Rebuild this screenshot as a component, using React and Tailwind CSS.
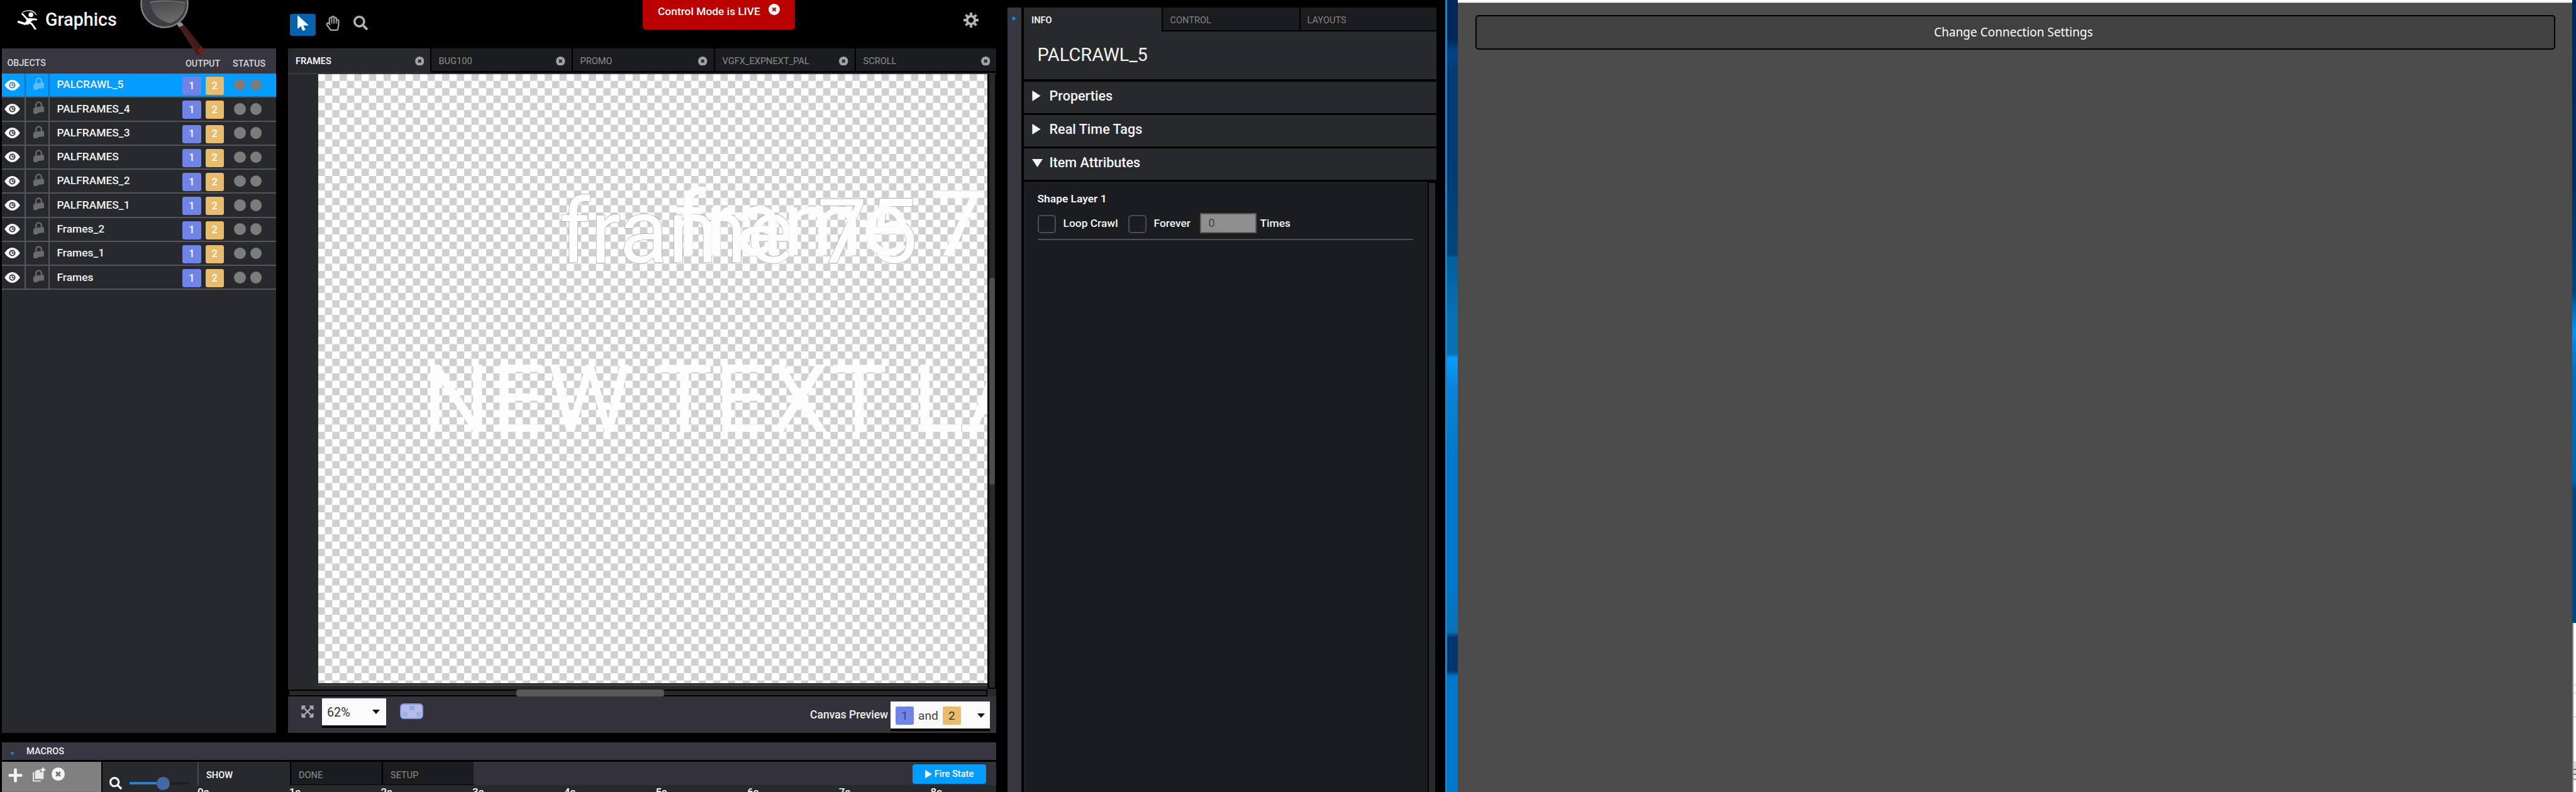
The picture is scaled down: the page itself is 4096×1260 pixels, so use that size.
import React from "react";
import { FaExpandArrowsAlt, FaPlus, FaRegHandPaper, FaSearch } from "react-icons/fa";

const OBJECTS = [
  "PALCRAWL_5",
  "PALFRAMES_4",
  "PALFRAMES_3",
  "PALFRAMES",
  "PALFRAMES_2",
  "PALFRAMES_1",
  "Frames_2",
  "Frames_1",
  "Frames",
];

function CloseCircle({ className, mark = "#1c1d21" }) {
  return (
    <svg viewBox="0 0 16 16" className={className}>
      <circle cx="8" cy="8" r="8" fill="currentColor" />
      <path d="M5.500 5.500l5 5M10.500 5.500l-5 5" stroke={mark} strokeWidth="2" />
    </svg>
  );
}

function Eye({ className, pupil }) {
  return (
    <svg viewBox="0 0 26 18" className={className}>
      <path d="M0 9C4 3 8.500 0 13 0s9 3 13 9c-4 6-8.500 9-13 9S4 15 0 9z" fill="#fafafa" />
      <circle cx="13" cy="9" r="4.400" fill="none" stroke={pupil} strokeWidth="2" />
      <path d="M13 6v3.200h3" fill="none" stroke={pupil} strokeWidth="1.500" />
    </svg>
  );
}

function Lock({ className }) {
  return (
    <svg viewBox="0 0 18 21" className={className}>
      <path d="M4.500 11V6.500a4.500 5 0 0 1 9.200 0V9" fill="none" stroke="currentColor" strokeWidth="2.400" />
      <path d="M0 12.500L2 10.500 16 8.500 18 10v8l-9 1-3 2H1.500L0 19.500z" fill="currentColor" />
    </svg>
  );
}

function Gear({ className }) {
  return (
    <svg viewBox="0 0 26 26" className={className}>
      <circle cx="13" cy="13" r="6.800" fill="none" stroke="currentColor" strokeWidth="4.400" />
      <g stroke="currentColor" strokeWidth="4.200">
        <path d="M13 0v5M13 21v5M0 13h5M21 13h5M3.800 3.800l3.400 3.400M18.800 18.800l3.400 3.400M22.200 3.800l-3.400 3.400M7.200 18.800l-3.400 3.400" />
      </g>
    </svg>
  );
}

function Caret({ className }) {
  return (
    <svg viewBox="0 0 12 7" className={className} preserveAspectRatio="none">
      <path d="M0 0h12L6 7z" fill="currentColor" />
    </svg>
  );
}

function BrandLogo() {
  return (
    <svg viewBox="0 0 33 33" className="h-[31px] w-[31px]">
      <g fill="none" stroke="#fff" strokeLinecap="round">
        <path d="M9 3.500C15 -0.500 27 -0.500 31.500 8" strokeWidth="1.400" />
        <path d="M8 6.500L16 15 31.500 16" strokeWidth="3" />
        <path d="M19 18L12.500 23.500 1.500 20" strokeWidth="3.800" />
        <path d="M18.500 20l6 4 5.500 8" strokeWidth="3.200" />
      </g>
      <circle cx="22.500" cy="8" r="4" fill="#fff" />
      <path d="M14 13l8 1.500 5 2-5 4-4 4.500-7-1 4-6z" fill="#fff" />
    </svg>
  );
}

function MagnifyingGlass() {
  return (
    <svg viewBox="0 0 112 90" className="pointer-events-none absolute left-[222px] top-0 h-[90px] w-[112px]">
      <defs>
        <linearGradient id="lens" x1="0" y1="0" x2="0.300" y2="1">
          <stop offset="0" stopColor="#45454a" />
          <stop offset="1" stopColor="#6b6b6b" />
        </linearGradient>
        <linearGradient id="grip" x1="0" y1="1" x2="1" y2="0.300">
          <stop offset="0.300" stopColor="#a5684f" />
          <stop offset="0.450" stopColor="#4a1f1e" />
          <stop offset="1" stopColor="#2a1010" />
        </linearGradient>
      </defs>
      <circle cx="39.500" cy="6.500" r="37" fill="#3c3d43" stroke="#7e7e80" strokeWidth="2.600" />
      <path d="M16 3Q39 -2 73 3Q72 28 49 37Q22 32 16 3z" fill="url(#lens)" />
      <path d="M16 4Q39 -1 72 4" fill="none" stroke="#86868a" strokeWidth="1.200" />
      <path d="M59 38l7-3 4 5-7 4z" fill="#8f8f8f" />
      <path d="M63 43l8-3q4 4 8 10l23 28q3 5-1 8-6 4-12-2z" fill="url(#grip)" />
      <path d="M97 88q8-1 6-8l-5-5-6 4z" fill="#6d211c" />
    </svg>
  );
}

function ObjectRow({ name, selected }) {
  return (
    <div
      className={
        selected
          ? "flex h-[38.280px] items-center border-b-2 border-[#5b6066] bg-[#049dff]"
          : "flex h-[38.280px] items-center border-b-2 border-[#56565a] bg-[#28292d]"
      }
    >
      <div
        className={
          selected
            ? "flex h-full w-[38px] items-center justify-center border-r-2 border-[#1272b4]"
            : "flex h-full w-[38px] items-center justify-center border-r-2 border-[#56565a]"
        }
      >
        <Eye className="mr-[3px] h-[17px] w-[25px]" pupil={selected ? "#2f83c4" : "#303034"} />
      </div>
      <div
        className={
          selected
            ? "flex h-full w-[38px] items-center border-r-2 border-[#1272b4] pb-[4px] pl-[12px] text-[#5cbcff]"
            : "flex h-full w-[38px] items-center border-r-2 border-[#56565a] pb-[4px] pl-[12px] text-[#6c6c6c]"
        }
      >
        <Lock className="h-[20px] w-[17px]" />
      </div>
      <span className="w-[211px] pl-[11.500px] text-[17.400px] font-medium leading-none text-[#f2f2f2]">{name}</span>
      <div className="flex gap-[7px] pt-[3px] text-[16px] font-medium leading-none text-white">
        <span className="flex h-[29px] w-[29.500px] items-center justify-center rounded-[3px] bg-[#7084e8]">1</span>
        <span className="flex h-[29px] w-[29.500px] items-center justify-center rounded-[3px] bg-[#e8bc6c]">2</span>
      </div>
      <div className="ml-[16px] flex gap-[7px]">
        <span className="size-[18.500px] rounded-full bg-[#7c7c7c]" />
        <span className="size-[18.500px] rounded-full bg-[#7c7c7c]" />
      </div>
    </div>
  );
}

function ObjectsPanel() {
  return (
    <section className="h-[1089px] w-[436px] bg-[#28292d]">
      <div className="flex h-[40px] items-center bg-[#383741] pt-[6px] text-[14.300px] font-medium leading-none text-[#d8d8d8]">
        <span className="w-[292px] pl-[8.500px]">OBJECTS</span>
        <span className="w-[75px] pt-[2px]">OUTPUT</span>
        <span className="pt-[2px]">STATUS</span>
      </div>
      {OBJECTS.map((name, i) => (
        <ObjectRow key={name} name={name} selected={i === 0} />
      ))}
    </section>
  );
}

function CanvasTab({ label, active, className }) {
  return (
    <div
      className={
        (active
          ? "flex h-[39px] bg-[#28292d] pb-[3px] font-semibold text-[#f4f4f4] "
          : "flex h-[36px] bg-[#1b1c20] text-[#8c8c8c] ") + className
      }
    >
      <div className="flex h-[36px] w-full items-center justify-between pl-[12px] pr-[10px] pt-[4px] text-[14.600px] leading-none">
        <span>{label}</span>
        <CloseCircle className="size-[14.500px] text-[#a2a3a8]" />
      </div>
    </div>
  );
}

function CanvasPanel() {
  return (
    <section className="flex h-[1089px] w-[1126px] flex-col bg-[#28292d]">
      <div className="flex h-[39px] items-start bg-black">
        <CanvasTab label="FRAMES" active className="w-[226px]" />
        <CanvasTab label="BUG100" className="ml-[1.500px] w-[223px]" />
        <CanvasTab label="PROMO" className="ml-[2px] w-[224px]" />
        <CanvasTab label="VGFX_EXPNEXT_PAL" className="ml-[2px] w-[222px]" />
        <CanvasTab label="SCROLL" className="ml-[2px] w-[223.500px]" />
      </div>
      <div className="h-[2px] w-[1112px] bg-[#3a3942]" />
      <div className="flex h-[979px]">
        <div className="w-[48px]" />
        <div className="w-[1064px]">
          <div className="relative h-[969px] overflow-hidden whitespace-pre bg-[conic-gradient(#d0d0d0_25%,#fff_0_50%,#d0d0d0_0_75%,#fff_0)] bg-[length:23.300px_23.270px] bg-[position:10.700px_10.700px] leading-none text-[#fdfdfd]">
            <span className="absolute left-[383px] top-[180px] text-[143px] [paint-order:stroke] [-webkit-text-stroke:1.400px_#a4a4a4]">
              frame 75
            </span>
            <span className="absolute left-[566px] top-[168px] text-[143px] [paint-order:stroke] [-webkit-text-stroke:1px_#ececec]">
              frame 7
            </span>
            <span className="absolute left-[166px] top-[443px] text-[150px] tracking-[3px]">NEW TEXT LA</span>
          </div>
          <div className="h-[2px] bg-[#1a1a1c]" />
          <div className="h-[2px] bg-[#4a4a50]" />
        </div>
        <div className="flex h-[978px] w-[14px] flex-col border-b-2 border-l-[3px] border-r-2 border-black bg-[#28292d] pt-[324px]">
          <div className="h-[329px] rounded-[4px] bg-[#4c4c50]" />
        </div>
      </div>
      <div className="flex h-[11px] w-[1112px] border-2 border-black bg-[#26272b]">
        <div className="-my-[2px] ml-[361px] w-[235px] rounded-[3px] bg-[#585858]" />
      </div>
      <div className="flex grow bg-[#33323a] pl-[20px]">
        <FaExpandArrowsAlt className="mt-[13px] size-[22px] text-[#a8a8ac]" />
        <div className="ml-[12px] mt-[3px] flex h-[47px] w-[102px] items-center justify-between border-b-[4px] border-black bg-[#fafafa] pl-[8px] pr-[10px] text-[19.800px] leading-none text-[#333]">
          <span className="pt-[3px]">62%</span>
          <Caret className="h-[7px] w-[12px] text-[#111]" />
        </div>
        <div className="ml-[22px] mt-[11px] flex h-[25px] w-[37px] flex-col items-center justify-between rounded-[6px] border-2 border-[#8494e6] bg-[#b6bce6] py-[2px]">
          <span className="h-[7px] w-[8px] bg-[#90a8e4]" />
          <div className="flex gap-[14px]">
            <span className="h-[7px] w-[7px] bg-[#90b4e0]" />
            <span className="h-[7px] w-[7px] bg-[#90b4e0]" />
          </div>
        </div>
        <span className="ml-auto mt-[21px] text-[17.500px] font-medium leading-none text-[#f0f0f0]">Canvas Preview</span>
        <div className="ml-[4px] mr-[10px] mt-[8px] flex h-[47px] w-[158px] items-center border-b-[4px] border-black bg-[#fafafa] pl-[8px] pt-[2px] text-[19.200px] leading-none text-[#444]">
          <span className="flex h-[29px] w-[29px] items-center justify-center rounded-[3px] bg-[#7084e8] text-[#3a4484]">1</span>
          <span className="mx-[7px]">and</span>
          <span className="flex h-[29px] w-[29px] items-center justify-center rounded-[3px] bg-[#e8bc6c] text-[#3c3220]">2</span>
          <Caret className="ml-[26px] h-[7px] w-[12px] text-[#111]" />
        </div>
      </div>
    </section>
  );
}

function TopBar() {
  return (
    <header className="relative flex h-[77px] w-[1602px] items-start">
      <div className="flex w-[461px] items-center pl-[28px] pt-[16px]">
        <BrandLogo />
        <span className="ml-[13px] text-[28.700px] font-medium leading-[31px] text-[#f4f4f4]">Graphics</span>
      </div>
      <div className="mt-[22px] flex h-[35px] w-[41px] justify-center rounded-[4px] bg-[#0563ab]">
        <svg viewBox="0 0 19 32" className="mt-[2px] h-[25px] w-[18px]" preserveAspectRatio="none">
          <path d="M0 0v28l5.500-5.500L9 32l4.500-2-3.800-9H19z" fill="#fff" />
        </svg>
      </div>
      <FaRegHandPaper className="ml-[15px] mt-[25px] size-[24px] text-[#a4a4a8]" />
      <FaSearch className="ml-[21px] mt-[25px] size-[23px] text-[#b0b0b4]" />
      <div className="ml-auto flex h-[46.500px] w-[242px] rounded-b-[5px] bg-[#ba0000] pl-[24px] text-[17.400px] font-medium leading-none text-white">
        <span className="mt-[9.500px]">Control Mode is LIVE</span>
        <CloseCircle className="ml-[13px] mt-[6px] size-[18px]" mark="#ba0000" />
      </div>
      <Gear className="ml-[268px] mr-[46px] mt-[20px] size-[24px] text-[#b4b4b6]" />
      <MagnifyingGlass />
    </header>
  );
}

function Macros() {
  return (
    <section className="flex h-[79px] w-[1581px] flex-col overflow-hidden">
      <div className="flex h-[28px] shrink-0 items-center bg-[#383741] text-[14.600px] font-medium leading-none text-[#f0f0f0]">
        <Caret className="ml-[13px] mt-[8px] h-[4px] w-[7px] text-[#1492e8]" />
        <span className="ml-[19px]">MACROS</span>
      </div>
      <div className="mt-[3px] flex h-[48px]">
        <div className="flex h-full w-[158px] shrink-0 items-start border-b border-[#4a78b8] bg-[#808080] pl-[9px] pt-[9px] text-[#f4f4f4]">
          <FaPlus className="size-[25px]" />
          <svg viewBox="0 0 22 25" className="ml-[15px] h-[23px] w-[20px]">
            <path d="M1.200 8v15.500H14" fill="none" stroke="#e2e2e2" strokeWidth="2.400" />
            <path d="M4 7l4-3h5v4h6v12H4z" fill="#e8e8e8" />
            <path d="M18 0v8M14 4h8" stroke="#f4f4f4" strokeWidth="2.800" />
          </svg>
          <CloseCircle className="ml-[10px] size-[21px]" mark="#6c6c6c" />
        </div>
        <div className="ml-[2px] flex h-full w-[151px] shrink-0 items-center bg-[#28292d] pl-[11px] pt-[20px]">
          <FaSearch className="size-[20px] text-white" />
          <div className="ml-[12px] flex h-[3px] w-[94px] items-center rounded-full bg-[#1a1a1d]">
            <span className="h-[4px] w-[43px] bg-[#2f80cc]" />
            <span className="size-[21px] shrink-0 rounded-full bg-[#4668a4]" />
          </div>
        </div>
        <div className="flex min-w-0 grow flex-col bg-[#28292d]">
          <div className="flex h-[37px] shrink-0 bg-black text-[14.600px] leading-none">
            <div className="w-[147px] border-l-2 border-[#4a4a4e] bg-[#28292d] pl-[12px] pt-[14px] font-medium text-white">SHOW</div>
            <div className="mb-[1px] ml-[2px] w-[144px] bg-[#1b1c20] pl-[12px] pt-[14px] text-[#8c8c8c]">DONE</div>
            <div className="mb-[1px] ml-[2px] w-[144px] bg-[#1b1c20] pl-[12px] pt-[14px] text-[#8c8c8c]">SETUP</div>
            <div className="flex grow items-start justify-end bg-[#33323a] pr-[16px] pt-[4px]">
              <button className="flex h-[31px] w-[117px] items-center justify-center gap-[4px] rounded-[4px] bg-[#049dff] text-[14.600px] font-medium text-white">
                <svg viewBox="0 0 12 14" className="h-[13px] w-[11px]">
                  <path d="M0 0l12 7L0 14z" fill="currentColor" />
                </svg>
                Fire State
              </button>
            </div>
          </div>
          <div className="flex h-[11px] overflow-hidden pt-[3px] text-[17px] font-medium leading-none text-white">
            {["0s", "1s", "2s", "3s", "4s", "5s", "6s", "7s", "8s"].map((t) => (
              <span key={t} className="w-[145.700px] shrink-0">
                {t}
              </span>
            ))}
          </div>
        </div>
      </div>
    </section>
  );
}

function Section({ label, open }) {
  return (
    <div className="mb-[2.300px] flex h-[50.800px] items-center bg-[#28292d] pb-[4px] text-[21.600px] font-medium leading-none text-[#f4f4f4]">
      <div className="flex w-[40.500px] pl-[13px]">
        {open ? (
          <Caret className="h-[13px] w-[17px]" />
        ) : (
          <svg viewBox="0 0 14 18" className="h-[17px] w-[14px]">
            <path d="M0 0l14 9L0 18z" fill="currentColor" />
          </svg>
        )}
      </div>
      <span>{label}</span>
    </div>
  );
}

function InfoPanel() {
  return (
    <section className="flex h-full w-[656px] flex-col pt-[11.500px]">
      <div className="flex h-[38px] shrink-0 items-start bg-black text-[14.600px] leading-none">
        <div className="h-[38px] w-[219px] bg-[#28292d] pl-[12px] pt-[13px] font-semibold text-[#f0f0f0]">INFO</div>
        <div className="ml-[1.500px] h-[36px] w-[217px] bg-[#1b1c20] pl-[12px] pt-[13px] text-[#828282]">CONTROL</div>
        <div className="ml-[2px] h-[36px] w-[216.500px] bg-[#1b1c20] pl-[11px] pt-[13px] text-[#828282]">LAYOUTS</div>
      </div>
      <div className="mb-[4px] h-[76px] shrink-0 bg-[#28292d] pl-[21.500px] pt-[23px] text-[29px] leading-none text-[#f4f4f4]">PALCRAWL_5</div>
      <Section label="Properties" />
      <Section label="Real Time Tags" />
      <Section label="Item Attributes" open />
      <div className="flex grow">
        <div className="w-[641.500px] bg-[#1b1c20] pl-[21.500px] pr-[23px] pt-[19px] text-[17.400px] font-medium leading-none text-[#f4f4f4]">
          <div className="font-semibold">Shape Layer 1</div>
          <div className="mt-[14px] flex h-[34px] items-center">
            <span className="h-[29px] w-[29px] rounded-[5px] border-2 border-[#4c4c50]" />
            <span className="ml-[12px] w-[103px] pb-[1px]">Loop Crawl</span>
            <span className="h-[29px] w-[29px] rounded-[5px] border-2 border-[#4c4c50]" />
            <span className="ml-[12px] w-[73px] pb-[1px]">Forever</span>
            <span className="mb-[3px] flex h-[32px] w-[90px] items-center border-2 border-[#5c5c5c] bg-[#8f8f8f] pl-[12px] text-[18px] font-normal text-[#444]">
              0
            </span>
            <span className="ml-[6px] pb-[1px]">Times</span>
          </div>
          <div className="mt-[7px] h-[2px] bg-[#505052]" />
        </div>
        <div className="ml-[2.500px] mt-[2px] w-[10px] bg-[#28292d]" />
      </div>
    </section>
  );
}

export default function App() {
  return (
    <div className="flex h-[1260px] w-[4096px] overflow-hidden bg-black font-['Roboto',sans-serif]">
      <div className="flex w-[1602px] flex-col">
        <TopBar />
        <main className="flex gap-[19px] pl-[3px]">
          <ObjectsPanel />
          <CanvasPanel />
        </main>
        <div className="pl-[3px] pt-[15px]">
          <Macros />
        </div>
      </div>
      <div className="mt-[11.500px] w-[22px] bg-[#383741] pl-[8px] pt-[14px]">
        <svg viewBox="0 0 6 7" className="h-[7px] w-[6px]">
          <path d="M0 0l6 3.500L0 7z" fill="#1492e8" />
        </svg>
      </div>
      <div className="ml-[4px] w-[656px]">
        <InfoPanel />
      </div>
      <div className="ml-[14px] w-[20px] border-l-[3px] border-[#2781bf] bg-[linear-gradient(#00285a_0%,#00285a_5%,#004486_6.500%,#003a74_9%,#003a74_20%,#00457c_32.200%,#005f9f_32.500%,#0a70b5_40%,#0a70b5_44.700%,#079dfc_45.200%,#0a84da_49%,#0078cc_57%,#0078cc_74%,#0a70b5_79.800%,#003570_80.500%,#003570_84.700%,#0078cc_85.400%,#0078cc_100%)]" />
      <div className="w-[1772px] bg-[#4b4b4b]">
        <div className="h-[5px] border-b border-[#888] bg-white" />
        <div className="ml-[28px] mr-[27px] mt-[19px] flex h-[55px] items-center justify-center rounded-[5px] border-2 border-black bg-[#414141] pr-[6px] font-['Noto_Sans',sans-serif] text-[19px] leading-none text-white">
          Change Connection Settings
        </div>
      </div>
      <div className="flex grow flex-col">
        <div className="h-[991px] bg-[linear-gradient(#00285a_0%,#00305f_30%,#00457c_47%,#0065ab_49%,#0a90ee_53%,#006fbc_60%,#0065ab_77%,#00457c_79%,#00457c_100%)]" />
        <div className="flex grow flex-col border-l-2 border-[#8a8a8a] bg-white pt-[98px]">
          <div className="h-px bg-[#ccc]" />
          <div className="mt-[12px] h-px bg-[#ccc]" />
          <div className="mt-[37px] h-px bg-[#bbb]" />
          <div className="mt-[70px] h-[12px] bg-[#ddd]" />
          <div className="h-[2px] bg-[#777]" />
          <div className="h-[6px] bg-[#ddd]" />
          <div className="h-[2px] bg-[#777]" />
          <div className="h-[6px] bg-[#eee]" />
          <div className="h-[2px] bg-[#999]" />
        </div>
      </div>
    </div>
  );
}
